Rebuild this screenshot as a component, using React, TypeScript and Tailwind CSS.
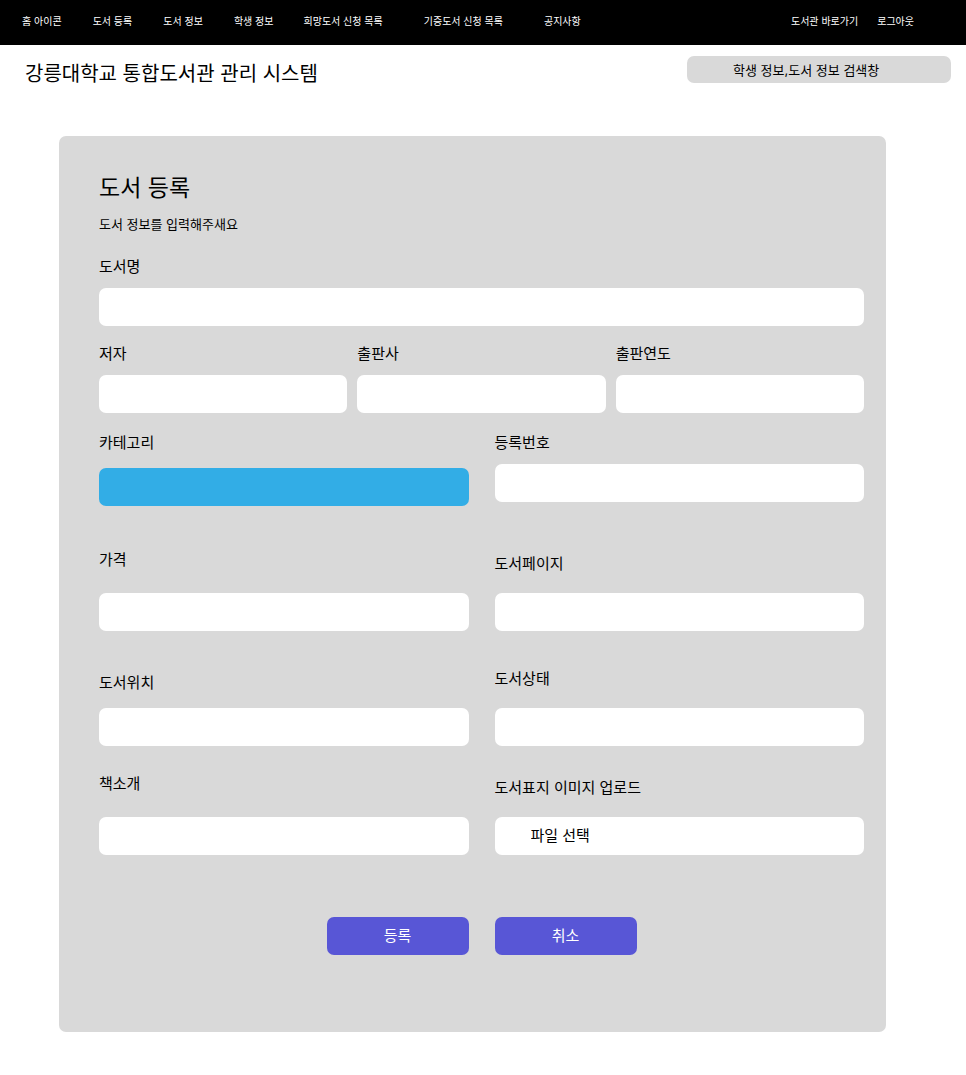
import { useState, type ReactNode } from "react";

const primaryLinks = ["홈 아이콘", "도서 등록", "도서 정보", "학생 정보"];
const boardLinks = ["희망도서 신청 목록", "기증도서 신청 목록", "공지사항"];
const accountLinks = ["도서관 바로가기", "로그아웃"];

const labelGap = {
  sm: "gap-[10px]",
  md: "gap-[14px]",
  lg: "gap-[18px]",
  xl: "gap-[22px]",
};

const boxClass = "h-[38px] w-full rounded-[7px] px-3 text-[15px] text-black";

type FieldProps = {
  id: string;
  label: string;
  gap?: keyof typeof labelGap;
  children?: ReactNode;
};

function Field({ id, label, gap = "sm", children }: FieldProps) {
  return (
    <div className={`relative flex min-w-0 flex-col ${labelGap[gap]}`}>
      <label htmlFor={id} className="text-[15px] leading-[22px]">
        {label}
      </label>
      {children ?? <input id={id} name={id} type="text" className={`${boxClass} bg-white`} />}
    </div>
  );
}

function NavLinks({ items, className }: { items: string[]; className: string }) {
  return (
    <ul className={`flex ${className}`}>
      {items.map((item) => (
        <li key={item}>
          <a href="#" className="whitespace-nowrap">
            {item}
          </a>
        </li>
      ))}
    </ul>
  );
}

export default function App() {
  const [fileName, setFileName] = useState("");

  return (
    <div className="min-h-screen bg-white pb-[42px] font-['Inter','Noto_Sans_CJK_KR',sans-serif] text-black">
      <nav className="flex h-[45px] items-center bg-black pr-[52px] pb-1 pl-[22px] text-[10px] leading-4 text-white">
        <NavLinks items={primaryLinks} className="gap-[31px]" />
        <NavLinks items={boardLinks} className="ml-[30px] gap-[41px]" />
        <NavLinks items={accountLinks} className="ml-auto gap-[19px]" />
      </nav>

      <header className="flex items-start justify-between pt-[11px] pr-[15px] pl-[25px]">
        <h1 className="pt-[3px] text-[20px] leading-[30px]">강릉대학교 통합도서관 관리 시스템</h1>
        <input
          type="search"
          aria-label="학생 정보,도서 정보 검색창"
          placeholder="학생 정보,도서 정보 검색창"
          className="h-[27px] w-[264px] rounded-[7px] bg-[#d9d9d9] pr-3 pl-[46px] text-[13px] placeholder:text-black placeholder:opacity-100"
        />
      </header>

      <main className="mt-[47px] mr-20 ml-[59px]">
        <form
          className="rounded-[7px] bg-[#d9d9d9] pt-9 pr-[22px] pb-[77px] pl-10"
          onSubmit={(event) => event.preventDefault()}
        >
          <h2 className="text-[23px] leading-8">도서 등록</h2>
          <p className="mt-[10px] text-[13px] leading-5">도서 정보를 입력해주새요</p>

          <div className="mt-[22px]">
            <Field id="title" label="도서명" />
          </div>

          <div className="mt-[17px] grid grid-cols-3 gap-[10px]">
            <Field id="author" label="저자" />
            <Field id="publisher" label="출판사" />
            <Field id="year" label="출판연도" />
          </div>

          <div className="mt-[19px] grid grid-cols-2 items-start gap-[26px]">
            <Field id="category" label="카테고리" gap="md">
              <select id="category" name="category" className={`${boxClass} appearance-none bg-[#32ade6]`}>
                <option value="" />
              </select>
            </Field>
            <Field id="number" label="등록번호" />
          </div>

          <div className="mt-[43px] grid grid-cols-2 items-end gap-[26px]">
            <Field id="price" label="가격" gap="xl" />
            <Field id="pages" label="도서페이지" gap="lg" />
          </div>

          <div className="mt-[37px] grid grid-cols-2 items-end gap-[26px]">
            <Field id="location" label="도서위치" gap="md" />
            <Field id="status" label="도서상태" gap="lg" />
          </div>

          <div className="mt-[27px] grid grid-cols-2 items-end gap-[26px]">
            <Field id="intro" label="책소개" gap="xl" />
            <Field id="cover" label="도서표지 이미지 업로드" gap="lg">
              <label
                htmlFor="cover"
                className="flex h-[38px] items-center rounded-[7px] bg-white px-9 text-[15px] focus-within:ring-2"
              >
                <span className="truncate">{fileName || "파일 선택"}</span>
                <input
                  id="cover"
                  name="cover"
                  type="file"
                  accept="image/*"
                  className="sr-only"
                  onChange={(event) => setFileName(event.target.files?.[0]?.name ?? "")}
                />
              </label>
            </Field>
          </div>

          <div className="mt-[62px] flex justify-center gap-[26px]">
            <button type="submit" className="h-[38px] w-[142px] rounded-[7px] bg-[#5856d6] text-[15px] text-white">
              등록
            </button>
            <button type="reset" className="h-[38px] w-[142px] rounded-[7px] bg-[#5856d6] text-[15px] text-white">
              취소
            </button>
          </div>
        </form>
      </main>
    </div>
  );
}
